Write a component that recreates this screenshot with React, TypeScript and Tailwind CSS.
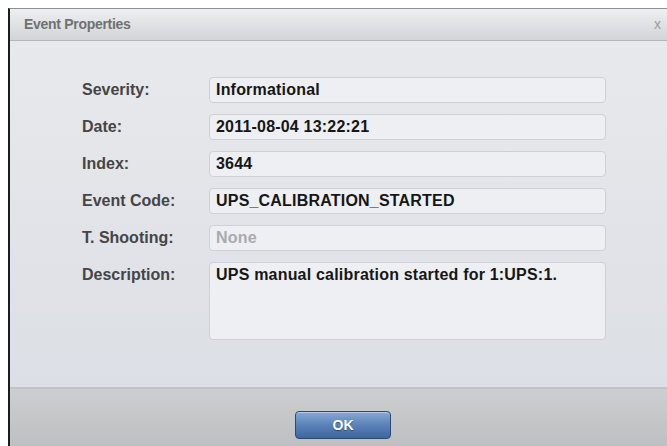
import { ReactNode } from "react";

type Field = {
  label: string;
  value: string;
  muted?: boolean;
  tall?: boolean;
};

const fields: Field[] = [
  { label: "Severity:", value: "Informational" },
  { label: "Date:", value: "2011-08-04 13:22:21" },
  { label: "Index:", value: "3644" },
  { label: "Event Code:", value: "UPS_CALIBRATION_STARTED" },
  { label: "T. Shooting:", value: "None", muted: true },
  {
    label: "Description:",
    value: "UPS manual calibration started for 1:UPS:1.",
    tall: true,
  },
];

function ValueBox({ children, muted, tall }: { children: ReactNode; muted?: boolean; tall?: boolean }) {
  return (
    <div
      className={
        "w-[397px] rounded-[4px] border border-[#cdd0d5] bg-[#eeeff2] px-[6px] text-[16px] font-bold leading-[24px] tracking-[0.2px] " +
        (tall ? "h-[78px]" : "h-[26px]") +
        (muted ? " text-[#a9abae]" : " text-[#161616]")
      }
    >
      {children}
    </div>
  );
}

export default function App() {
  return (
    <div
      className="w-[667px] h-[446px] overflow-hidden bg-white pl-[8px] pt-[8px]"
      style={{ fontFamily: '"Liberation Sans", Arial, sans-serif' }}
    >
      <div className="flex h-full flex-col border-l-2 border-t border-l-[#1c1c1c] border-t-[#8e8f92]">
        {/* title bar */}
        <div className="flex h-[32px] items-center justify-between border-b border-[#b4b5b8] bg-gradient-to-b from-[#eeeff1] to-[#d3d4d7] pl-[14px] pr-[6px]">
          <span className="text-[14px] font-bold tracking-[-0.3px] text-[#707172]">Event Properties</span>
          <span className="text-[14px] text-[#9c9c9e]">x</span>
        </div>

        {/* fields */}
        <div className="flex flex-1 flex-col gap-[11px] bg-gradient-to-b from-[#e8e9ec] to-[#dcdfe5] pl-[72px] pt-[36px]">
          {fields.map((f) => (
            <div key={f.label} className="flex items-start">
              <div className="w-[127px] text-[16px] font-bold leading-[26px] text-[#454545]">{f.label}</div>
              <ValueBox muted={f.muted} tall={f.tall}>
                {f.value}
              </ValueBox>
            </div>
          ))}
        </div>

        {/* footer */}
        <div className="h-[59px] border-t-2 border-[#c2c3c6] bg-gradient-to-b from-[#cdcecf] to-[#bebfc2] pt-[22px]">
          <div className="flex justify-center pl-[9px]">
            <button className="h-[28px] w-[96px] rounded-[4px] border border-[#2c4a72] bg-gradient-to-b from-[#88abd6] via-[#5a82b8] to-[#3c679f] text-[14px] font-bold text-white shadow-[inset_0_1px_0_rgba(255,255,255,0.4)] [text-shadow:0_1px_1px_rgba(0,0,0,0.4)]">
              OK
            </button>
          </div>
        </div>
      </div>
    </div>
  );
}
